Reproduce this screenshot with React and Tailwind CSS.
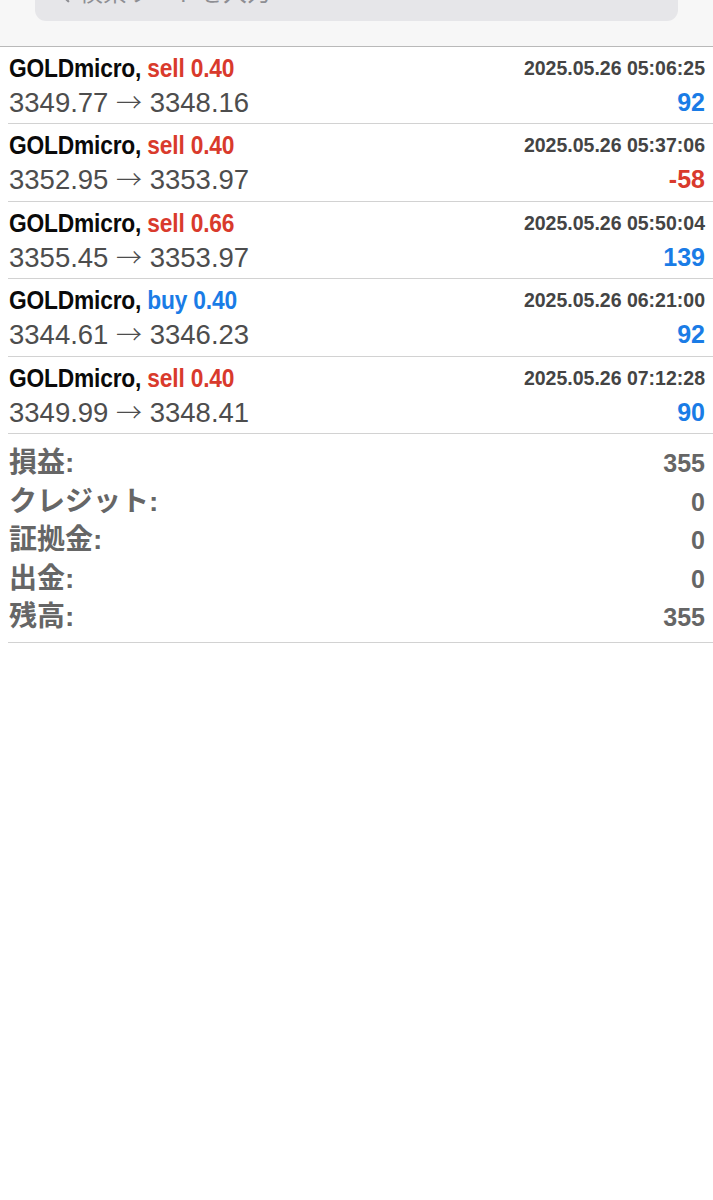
import React from "react";

const trades = [
  { side: "sell", lot: "0.40", time: "2025.05.26 05:06:25", open: "3349.77", close: "3348.16", profit: "92" },
  { side: "sell", lot: "0.40", time: "2025.05.26 05:37:06", open: "3352.95", close: "3353.97", profit: "-58" },
  { side: "sell", lot: "0.66", time: "2025.05.26 05:50:04", open: "3355.45", close: "3353.97", profit: "139" },
  { side: "buy", lot: "0.40", time: "2025.05.26 06:21:00", open: "3344.61", close: "3346.23", profit: "92" },
  { side: "sell", lot: "0.40", time: "2025.05.26 07:12:28", open: "3349.99", close: "3348.41", profit: "90" },
];

const summary = [
  ["損益:", "355"],
  ["クレジット:", "0"],
  ["証拠金:", "0"],
  ["出金:", "0"],
  ["残高:", "355"],
];

const sans = { fontFamily: '"Liberation Sans", Arial, sans-serif' };
const cjk = { fontFamily: '"Liberation Sans", "Noto Sans CJK JP", sans-serif' };
const arrowFont = { fontFamily: '"Noto Sans CJK JP", sans-serif' };

export default function App() {
  return (
    <div className="w-[713px] min-h-[1200px] bg-white" style={sans}>
      <div className="h-[47px] bg-[#f7f7f7] border-b border-[#b9b9b9] overflow-hidden px-[35px]">
        <div className="h-[56px] -mt-[35px] rounded-[11px] bg-[#e6e6e9] flex items-center pl-[14px] gap-[8px] text-[#8e8e93]">
          <svg width="22" height="22" viewBox="0 0 24 24" fill="none" stroke="#8e8e93" strokeWidth="2.4" strokeLinecap="round">
            <circle cx="10" cy="10" r="7" />
            <path d="M15.5 15.5 L21 21" />
          </svg>
          <span className="text-[24px]" style={cjk}>検索ワードを入力</span>
        </div>
      </div>

      {trades.map((t, i) => (
        <div key={i} className="ml-[8px] pl-[1px] pr-[8px] pt-[6px] pb-[2.4px] border-b border-[#d2d2d2]">
          <div className="h-[30px] flex items-center justify-between">
            <span className="inline-block origin-left scale-x-[0.91] whitespace-nowrap text-[25px] font-bold leading-[30px] tracking-[-0.2px]">
              <span className="text-[#0a0a0a]">GOLDmicro,</span>{" "}
              <span className={t.side === "buy" ? "text-[#1a7ce6]" : "text-[#d93a2c]"}>
                {t.side} {t.lot}
              </span>
            </span>
            <span className="text-[19.5px] font-bold text-[#444444] leading-[30px] whitespace-nowrap">
              {t.time}
            </span>
          </div>
          <div className="h-[38px] flex items-center justify-between">
            <span className="text-[27.5px] text-[#4d4d4d] leading-[38px] whitespace-nowrap">
              {t.open}{" "}
              <span className="text-[26px] font-light" style={arrowFont}>→</span>{" "}
              {t.close}
            </span>
            <span
              className={
                "text-[25px] font-bold leading-[38px] " +
                (t.profit.startsWith("-") ? "text-[#d93a2c]" : "text-[#1a7ce6]")
              }
            >
              {t.profit}
            </span>
          </div>
        </div>
      ))}

      <div className="ml-[8px] pl-[1px] pr-[8px] pt-[10px] pb-[6px] border-b border-[#d2d2d2]">
        {summary.map(([k, v]) => (
          <div key={k} className="h-[38.5px] flex items-center justify-between text-[#666666]">
            <span className="text-[28px] font-bold leading-[38px]" style={cjk}>{k}</span>
            <span className="text-[25px] font-bold leading-[38px]">{v}</span>
          </div>
        ))}
      </div>
    </div>
  );
}
